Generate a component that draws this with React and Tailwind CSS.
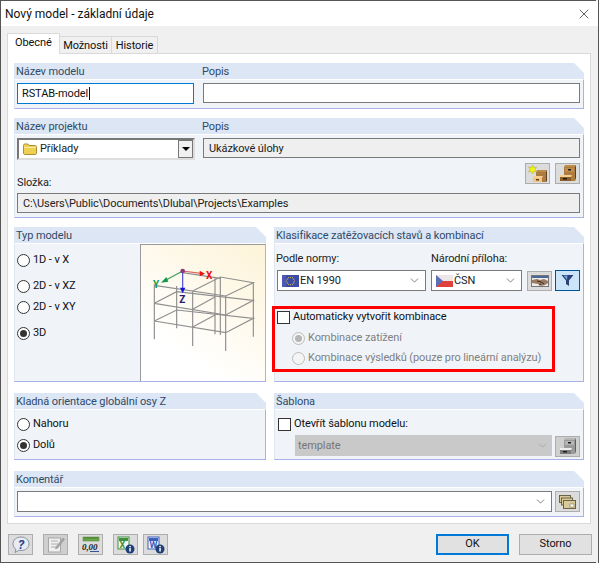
import React from 'react';
import { X, ChevronDown } from 'lucide-react';

const font = "font-['Roboto','Lato',sans-serif]";

function Group({ title, className = '', bodyClass = '', children }) {
  return (
    <div className={`flex flex-col ${className}`}>
      <div className="h-4 shrink-0 bg-[#dce6f4] pl-[2px] text-[11px] leading-[17px] text-[#2f4a68] [clip-path:polygon(0_0,calc(100%-10px)_0,100%_10px,100%_100%,0_100%)]">
        {title}
      </div>
      <div className={`grow bg-[#f0f4f9] border-t border-t-white border-r border-b border-r-[#a9b1ea] border-b-[#a9b1ea] border-l border-l-[#dfe6f2] ${bodyClass}`}>
        {children}
      </div>
    </div>
  );
}

function Radio({ checked, disabled, label, className = '' }) {
  return (
    <div className={`flex items-center h-[14px] text-[11px] ${disabled ? 'text-[#7f7f7f]' : 'text-[#111]'} ${className}`}>
      <span className={`w-[13px] h-[13px] rounded-full border flex items-center justify-center shrink-0 mr-[3px] ${disabled ? 'border-[#bcbcbc] bg-[#f4f4f4]' : 'border-[#333] bg-white'}`}>
        {checked && <span className={`w-[7px] h-[7px] rounded-full ${disabled ? 'bg-[#b5b5b5]' : 'bg-[#333]'}`} />}
      </span>
      <span className="whitespace-nowrap pt-px">{label}</span>
    </div>
  );
}

function Check({ label }) {
  return (
    <div className="flex items-center h-[14px] text-[11px] text-[#111]">
      <span className="w-[13px] h-[13px] border border-[#333] bg-white shrink-0 mr-[3px]" />
      <span className="whitespace-nowrap pt-px">{label}</span>
    </div>
  );
}

function Field({ value, className = '', gray }) {
  return (
    <div className={`h-[20px] border border-[#7a7a7a] px-[5px] text-[11px] leading-[20px] text-[#222] whitespace-nowrap ${gray ? 'bg-[#efefef]' : 'bg-white'} ${className}`}>
      {value}
    </div>
  );
}

function ToolButton({ children, className = '' }) {
  return (
    <div className={`w-[25px] h-[21px] shrink-0 border border-[#adadad] bg-[#dcdcdc] flex items-center justify-center ${className}`}>
      {children}
    </div>
  );
}

function Cabinet({ gray }) {
  const top = gray ? '#b5b5b5' : '#c08c4c';
  const side = gray ? '#5f5f5f' : '#5e4020';
  const front = gray ? '#9a9a9a' : '#ad7c40';
  const drawer = gray ? '#ececec' : '#f8cf90';
  const low = gray ? '#7c7c7c' : '#8a5c28';
  return (
    <svg width="18" height="17" viewBox="0 0 18 17">
      <path d="M6 0h11l-1 2H5z" fill={top} />
      <path d="M16 2l1-2v13l-1 3z" fill={side} />
      <path d="M5 2h11v14H5z" fill={front} />
      <path d="M6 3h9v4H6z" fill={top} />
      <rect x="9" y="4" width="3" height="1.500" fill="#1c1c1c" />
      <path d="M1 10h12l-1 2H1z" fill={drawer} />
      <path d="M1 12h11v4H1z" fill={low} />
      <rect x="4" y="13" width="4" height="1.500" fill="#1c1c1c" />
    </svg>
  );
}

function NewCabinet() {
  return (
    <svg width="20" height="18" viewBox="0 0 20 18">
      <path d="M9 5h10l-1 2H8z" fill="#c08c4c" />
      <path d="M8 7h10v10H8z" fill="#ad7c40" />
      <path d="M18 7l1-2v11l-1 1z" fill="#5e4020" />
      <path d="M5 11h10l-1 2H5z" fill="#f8cf90" />
      <path d="M5 13h9v4H5z" fill="#f4c486" />
      <rect x="8" y="14" width="3" height="1.500" fill="#5a3c1a" />
      <path d="M4.500 0l1.200 2.600L8.500 2 7 4.500l1.500 2.500-2.800-.5L4.500 9 3.300 6.500.5 7 2 4.500.5 2l2.800.6z" fill="#f2f21c" stroke="#a8a838" strokeWidth=".5" />
    </svg>
  );
}

function Folder() {
  return (
    <svg width="14" height="12" viewBox="0 0 14 12" className="shrink-0">
      <path d="M.5 2.500c0-1 .5-1.500 1.500-1.500h3l1 1.500h6c.8 0 1.500.5 1.500 1.500v6c0 1-.5 1.500-1.500 1.500H2c-1 0-1.500-.5-1.500-1.500z" fill="#f0d050" stroke="#a98f38" />
      <path d="M1 4h12v1H1z" fill="#fbeb9e" />
    </svg>
  );
}

function EuFlag() {
  const stars = [0, 1, 2, 3, 4, 5, 6, 7, 8, 9, 10, 11].map((i) => {
    const a = (i * Math.PI) / 6;
    return <circle key={i} cx={8.500 + 3.800 * Math.cos(a)} cy={6 + 3.800 * Math.sin(a)} r=".55" fill="#f5dc3c" />;
  });
  return (
    <svg width="17" height="12" viewBox="0 0 17 12" className="shrink-0">
      <rect width="17" height="12" fill="#3d4aa6" />
      <rect x="0" y="0" width="4" height="12" fill="#5864bd" opacity=".6" />
      {stars}
    </svg>
  );
}

function CzFlag() {
  return (
    <svg width="17" height="12" viewBox="0 0 17 12" className="shrink-0">
      <rect width="17" height="6" fill="#ece6e6" />
      <rect y="6" width="17" height="6" fill="#e0403c" />
      <path d="M0 0l7 6-7 6z" fill="#5a6fb8" />
    </svg>
  );
}

function Hand() {
  return (
    <svg width="18" height="14" viewBox="0 0 18 14">
      <rect x=".5" y="1.500" width="17" height="11" fill="#ececec" stroke="#777" />
      <rect x="1" y="2" width="16" height="2" fill="#4a6896" />
      <path d="M1 6l5-1 3 1 4-1 4 2v2l-3 2-4 1-3-2-6-1z" fill="#9a7a60" />
      <path d="M6 7l4 1 3 2M8 11l2-1" fill="none" stroke="#3d2a1c" />
    </svg>
  );
}

function Funnel() {
  return (
    <svg width="13" height="13" viewBox="0 0 13 13">
      <path d="M.5 1h12L8 6.500V12L5 10V6.500z" fill="#2d3f73" />
      <path d="M2.500 1.500h4L6 6z" fill="#6fa0e0" />
    </svg>
  );
}

function Frames() {
  return (
    <svg width="17" height="14" viewBox="0 0 17 14">
      <rect x=".5" y=".5" width="11" height="7" fill="#d8ca98" stroke="#6b6247" />
      <rect x="2.500" y="3" width="11" height="7" fill="#d8ca98" stroke="#6b6247" />
      <rect x="4.500" y="5.500" width="12" height="8" fill="#d8ca98" stroke="#6b6247" />
      <rect x="11" y="9" width="4" height="3" fill="#fff" stroke="#6b6247" strokeWidth=".5" />
    </svg>
  );
}

function Model() {
  return (
    <svg width="125" height="137" viewBox="0 12 375 411" className="block">
      <g stroke="#8f8f8f" strokeWidth="3.500" fill="none">
        <path d="M40 130V295M107 135V262M155 150V315M222 112V280M238 108V282M254 165V330M337 125V287" />
        <path d="M40 133L254 165L337 125L238 108L155 150M125 95L238 112" />
        <path d="M40 187L254 222L337 178L107 152L40 187M155 205L222 168" />
        <path d="M40 240L254 275L337 232L107 207L40 240M155 258L222 222" />
      </g>
      <path d="M125 90L180 97" stroke="#e0605c" strokeWidth="3.500" />
      <path d="M176 89L192 98L176 106z" fill="#ee1111" />
      <text x="195" y="115" fill="#ee1111" fontSize="30" fontWeight="700">X</text>
      <path d="M125 90L75 117" stroke="#3e9a5e" strokeWidth="3.500" />
      <path d="M60 125L76 108L82 122z" fill="#119944" />
      <text x="36" y="140" fill="#119944" fontSize="30" fontWeight="700">Y</text>
      <path d="M125 90V145" stroke="#4a4ad8" strokeWidth="3.500" />
      <path d="M117 140H133L125 157z" fill="#1111dd" />
      <text x="115" y="186" fill="#2a1a70" fontSize="30" fontWeight="700">Z</text>
      <circle cx="125" cy="90" r="7" fill="#8a3a78" />
    </svg>
  );
}

function HelpIcon() {
  return (
    <svg width="18" height="17" viewBox="0 0 18 17">
      <path d="M9 1c4.500 0 8 2.800 8 6.800s-3.500 6.700-8 6.700c-.8 0-1.500-.1-2.200-.2L3 16.500l.8-3.300C2 12 1 10 1 7.800 1 3.800 4.500 1 9 1z" fill="#e6ebf4" stroke="#8a8f9c" />
      <text x="9" y="13" textAnchor="middle" fontSize="13" fontWeight="700" fontStyle="italic" fill="#2e3f8a">?</text>
    </svg>
  );
}

function NoteIcon() {
  return (
    <svg width="18" height="17" viewBox="0 0 18 17">
      <rect x="1.500" y="2" width="12" height="14" fill="#efefef" stroke="#a8a8a8" />
      <path d="M4 5h7M4 8h7M4 11h5" stroke="#b0b0b0" />
      <path d="M9 11l7-9 1.500 1.200-7 9-2 .5z" fill="#a8a8a8" stroke="#888" strokeWidth=".5" />
    </svg>
  );
}

function UnitsIcon() {
  return (
    <svg width="18" height="17" viewBox="0 0 18 17">
      <rect x="1" y="1" width="16" height="4" fill="#6aa84a" stroke="#4c7c35" strokeWidth=".5" />
      <path d="M3 1v2M5 1v2M7 1v2M9 1v2M11 1v2M13 1v2M15 1v2" stroke="#2c5a1c" strokeWidth=".5" />
      <text x="0" y="13.500" fontSize="9" fontWeight="700" fontStyle="italic" fill="#222" fontFamily="'Liberation Serif', serif">0,00</text>
      <path d="M8 15.500h9" stroke="#3a4f9a" />
    </svg>
  );
}

function DocInfo({ color, letter }) {
  return (
    <svg width="18" height="18" viewBox="0 0 18 18">
      <rect x="1" y="1" width="11" height="12" fill="#f4f6f2" stroke={color} />
      <rect x="2" y="2" width="9" height="3" fill={color} />
      <text x="2.500" y="11.500" fontSize="9" fontWeight="700" fill={color}>{letter}</text>
      <circle cx="13" cy="13" r="4.500" fill="#1f3f78" />
      <rect x="12.300" y="12" width="1.500" height="3.500" fill="#fff" />
      <rect x="12.300" y="10" width="1.500" height="1.300" fill="#fff" />
    </svg>
  );
}

export default function App() {
  return (
    <div className={`${font} w-[600px] h-[563px] overflow-hidden bg-white tracking-[-0.1px]`}>
      <div className="w-[599px] h-[563px] border-l border-r border-[#555] bg-[#f0f0f0] flex flex-col">
        <div className="h-px w-[595px] shrink-0 bg-[#555]" />
        {/* title bar */}
        <div className="h-[25px] shrink-0 bg-white flex items-center justify-between pl-[4px] pr-[6px] text-[12px] tracking-normal text-[#111]">
          <span>Nový model - základní údaje</span>
          <X size={16} strokeWidth={1} color="#111" />
        </div>

        <div className="grow flex flex-col pl-[6px] pr-[7px] pt-[8px]">
          {/* tabs */}
          <div className="flex items-end h-[20px] text-[11px] text-[#111] relative z-10 -mb-px">
            <div className="w-[53px] h-[21px] bg-white border border-b-0 border-[#d9d9d9] pl-[7px] leading-[18px]">Obecné</div>
            <div className="w-[52px] h-[18px] bg-[#f0f0f0] border border-l-0 border-[#d9d9d9] text-center leading-[17px]">Možnosti</div>
            <div className="w-[46px] h-[18px] bg-[#f0f0f0] border border-l-0 border-[#d9d9d9] text-center leading-[17px]">Historie</div>
          </div>

          {/* tab page */}
          <div className="h-[471px] bg-white border border-[#d9d9d9] pt-[9px] px-[6px] flex flex-col">
            <Group title={<div className="flex"><span className="w-[186px]">Název modelu</span><span>Popis</span></div>} className="h-[46px]" bodyClass="pt-[3px] pl-[2px] pr-[3px] flex gap-[9px]">
              <div className="w-[177px] h-[21px] border border-[#0078d7] bg-white px-[4px] text-[11px] leading-[19px] text-[#111]">
                RSTAB-model<span className="border-l border-[#111] ml-px" />
              </div>
              <Field value="" className="grow h-[20px]" />
            </Group>

            <Group title={<div className="flex"><span className="w-[186px]">Název projektu</span><span>Popis</span></div>} className="h-[100px] mt-[9px]" bodyClass="pt-[3px] pl-[2px] pr-[3px] flex flex-col">
              <div className="flex gap-[8px]">
                <div className="w-[178px] h-[22px] border-2 border-[#777] border-r-[#ddd] border-b-[#ddd] bg-white flex items-center pl-[4px] text-[11px] text-[#222]">
                  <Folder />
                  <span className="ml-[3px] grow pt-px">Příklady</span>
                  <span className="w-[15px] h-[18px] bg-[#f0f0f0] border border-[#777] flex items-center justify-center">
                    <span className="border-x-[4px] border-x-transparent border-t-[4px] border-t-black" />
                  </span>
                </div>
                <Field value="Ukázkové úlohy" gray className="grow" />
              </div>
              <div className="flex justify-end gap-[5px] mt-[3px]">
                <ToolButton><NewCabinet /></ToolButton>
                <ToolButton><Cabinet /></ToolButton>
              </div>
              <div className="text-[11px] leading-[16px] text-[#222] -mt-[9px]">Složka:</div>
              <Field value="C:\Users\Public\Documents\Dlubal\Projects\Examples" gray className="mt-[2px]" />
            </Group>

            <div className="flex gap-[8px] mt-[9px]">
              <Group title="Typ modelu" className="w-[252px] h-[155px]" bodyClass="flex">
                <div className="w-[125px] pl-[2px] flex flex-col">
                  <Radio label="1D - v X" className="mt-[9px]" />
                  <Radio label="2D - v XZ" className="mt-[12px]" />
                  <Radio label="2D - v XY" className="mt-[7px]" />
                  <Radio checked label="3D" className="mt-[12px]" />
                </div>
                <div className="w-[125px] h-[137px] border-l border-t border-[#9a9a9a] bg-[linear-gradient(215deg,#fdf3d8_0%,#ffffff_75%)] overflow-hidden">
                  <Model />
                </div>
              </Group>

              <Group title="Klasifikace zatěžovacích stavů a kombinací" className="w-[310px] h-[155px]" bodyClass="pl-[1px] pr-[3px] flex flex-col">
                <div className="flex text-[11px] leading-[16px] text-[#222] mt-[7px]">
                  <span className="w-[155px]">Podle normy:</span>
                  <span>Národní příloha:</span>
                </div>
                <div className="flex items-start mt-[3px] pl-[1px]">
                  <div className="w-[149px] h-[21px] border border-[#7a7a7a] bg-white flex items-center pl-[4px] pr-[4px] text-[11px] text-[#222]">
                    <EuFlag />
                    <span className="ml-[1px] grow pt-px">EN 1990</span>
                    <ChevronDown size={13} strokeWidth={1.2} color="#444" />
                  </div>
                  <div className="w-[91px] h-[21px] ml-[5px] border border-[#7a7a7a] bg-white flex items-center pl-[4px] pr-[4px] text-[11px] text-[#222]">
                    <CzFlag />
                    <span className="ml-[1px] grow pt-px">ČSN</span>
                    <ChevronDown size={13} strokeWidth={1.2} color="#444" />
                  </div>
                  <ToolButton className="ml-[5px] mt-px !h-[20px]"><Hand /></ToolButton>
                  <div className="w-[25px] h-[21px] ml-[3px] border border-[#005499] bg-[#cce4f7] flex items-center justify-center">
                    <Funnel />
                  </div>
                </div>
                {/* red highlight */}
                <div className="w-[283px] h-[66px] -ml-[4px] mt-[15px] border-[3px] border-[#ff0000] pl-[2px] pt-px flex flex-col">
                  <Check label="Automaticky vytvořit kombinace" />
                  <Radio checked disabled label="Kombinace zatížení" className="ml-[15px] mt-[7px]" />
                  <Radio disabled label="Kombinace výsledků (pouze pro lineární analýzu)" className="ml-[15px] mt-[6px]" />
                </div>
              </Group>
            </div>

            <div className="flex gap-[8px] mt-[11px]">
              <Group title="Kladná orientace globální osy Z" className="w-[252px] h-[67px]" bodyClass="pl-[2px] flex flex-col">
                <Radio label="Nahoru" className="mt-[7px]" />
                <Radio checked label="Dolů" className="mt-[7px]" />
              </Group>
              <Group title="Šablona" className="w-[310px] h-[67px]" bodyClass="pl-[3px] pr-[3px] flex flex-col">
                <div className="mt-[7px]"><Check label="Otevřít šablonu modelu:" /></div>
                <div className="flex items-start mt-[4px] pl-[17px] gap-[3px]">
                  <div className="grow h-[21px] bg-[#c9c9c9] flex items-center px-[3px] text-[11px] text-[#777]">
                    <span className="grow pt-px">template</span>
                    <ChevronDown size={13} strokeWidth={1.2} color="#999" />
                  </div>
                  <ToolButton className="!bg-[#cfcfcf] mt-px"><Cabinet gray /></ToolButton>
                </div>
              </Group>
            </div>

            <Group title="Komentář" className="h-[46px] mt-[11px]" bodyClass="pt-[3px] pl-[2px] pr-[3px] flex gap-[3px]">
              <div className="grow h-[21px] border border-[#7a7a7a] bg-white flex items-center justify-end pr-[4px]">
                <ChevronDown size={13} strokeWidth={1.2} color="#444" />
              </div>
              <ToolButton><Frames /></ToolButton>
            </Group>
          </div>

          {/* bottom buttons */}
          <div className="flex items-start mt-[10px] pl-[1px] -mr-px text-[11px] text-[#111]">
            <ToolButton><HelpIcon /></ToolButton>
            <ToolButton className="ml-[10px] !bg-[#cfcfcf]"><NoteIcon /></ToolButton>
            <ToolButton className="ml-[10px]"><UnitsIcon /></ToolButton>
            <ToolButton className="ml-[10px]"><DocInfo color="#3f8f3f" letter="X" /></ToolButton>
            <ToolButton className="ml-[5px]"><DocInfo color="#3c5fc0" letter="W" /></ToolButton>
            <div className="ml-auto w-[73px] h-[21px] border-2 border-[#0078d7] bg-[#e1e1e1] flex items-center justify-center">OK</div>
            <div className="ml-[10px] w-[73px] h-[21px] border border-[#adadad] bg-[#e1e1e1] flex items-center justify-center">Storno</div>
          </div>
        </div>
        <div className="h-px w-[595px] shrink-0 bg-[#555]" />
      </div>
    </div>
  );
}
